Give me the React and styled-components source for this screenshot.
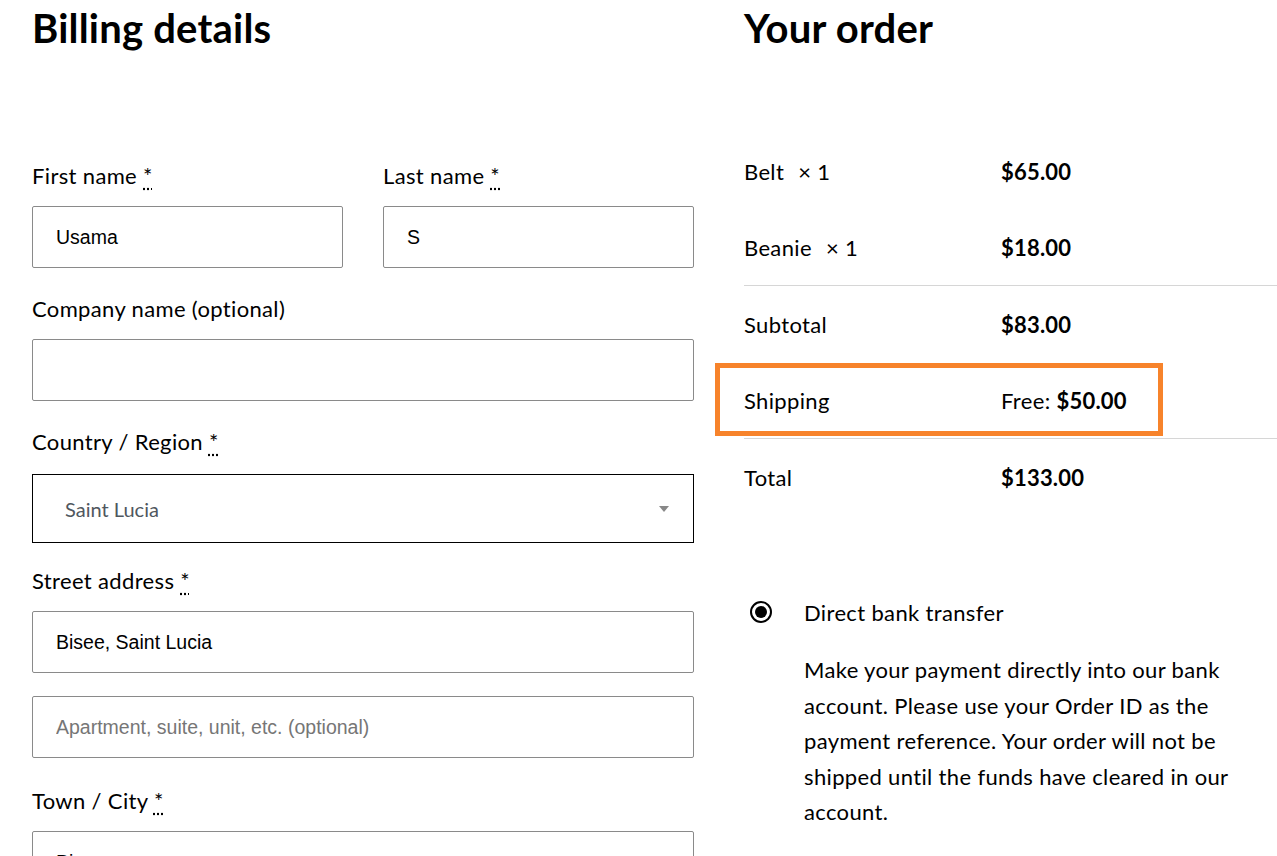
import React from 'react';
import styled, { createGlobalStyle } from 'styled-components';

const GlobalStyle = createGlobalStyle`
    html, body {
        margin: 0;
        padding: 0;
        background: #fff;
        overflow: hidden;
    }
    body {
        font-family: Lato, "Noto Sans", sans-serif;
        letter-spacing: 0.35px;
        color: #000;
    }
    * {
        box-sizing: border-box;
    }
`

const Page = styled.div`
    display: grid;
    grid-template-columns: 662px 560px;
    column-gap: 50px;
    padding-left: 32px;
    width: 1277px;
    height: 856px;
    overflow: hidden;
`

const Column = styled.section`
    display: flex;
    flex-direction: column;
`

const Heading = styled.h2`
    margin: 0;
    padding-top: 4px;
    font-size: 40px;
    line-height: 48px;
    font-weight: 700;
    letter-spacing: 0.2px;
`

const Form = styled.div`
    display: flex;
    flex-direction: column;
    margin-top: 107px;
`

const NameRow = styled.div`
    display: grid;
    grid-template-columns: 1fr 1fr;
    column-gap: 40px;
`

const Field = styled.div`
    display: flex;
    flex-direction: column;
    margin-bottom: ${props => props.gap || 24}px;
`

const Label = styled.label`
    font-size: 22px;
    line-height: 34px;
    margin-bottom: 13px;
`

const Required = styled.abbr`
    text-decoration: underline dotted;
    text-underline-offset: 4px;
    cursor: help;
`

const TextInput = styled.input`
    width: 100%;
    height: 62px;
    border: 1px solid #8a8a8a;
    border-radius: 2px;
    padding: 0 23px;
    font-family: "Liberation Sans", Arial, sans-serif;
    font-size: 19.5px;
    letter-spacing: normal;
    color: #000;
    background: #fff;
    outline: none;

    &::placeholder {
        color: #767676;
    }
`

const SelectBox = styled.div`
    display: flex;
    align-items: center;
    justify-content: space-between;
    height: 69px;
    margin-top: 2px;
    border: 1px solid #000;
    padding: 0 24px 0 32px;
    font-size: 20px;
    letter-spacing: 0;
    color: #50575e;
`

const OrderTable = styled.div`
    display: flex;
    flex-direction: column;
    margin-top: 81px;
`

const OrderRow = styled.div`
    position: relative;
    display: grid;
    grid-template-columns: 257px 1fr;
    align-items: center;
    height: ${props => props.divided ? 77 : 76}px;
    border-top: ${props => props.divided ? '1px solid #d6d6d6' : 'none'};
    font-size: 22px;
`

const Qty = styled.span`
    margin-left: 14px;
`

const Price = styled.span`
    font-weight: 700;
    letter-spacing: 0.2px;
`

const Highlight = styled.span`
    position: absolute;
    left: -29px;
    top: 1px;
    width: 448px;
    height: 73px;
    border: 5px solid #f7832b;
    pointer-events: none;
`

const Payment = styled.div`
    display: flex;
    flex-direction: column;
    margin-top: 79px;
`

const MethodRow = styled.div`
    display: flex;
    align-items: center;
    height: 36px;
    font-size: 22px;
`

const Radio = styled.span`
    display: flex;
    align-items: center;
    justify-content: center;
    width: 22px;
    height: 22px;
    margin: 0 32px 0 6px;
    border: 2px solid #000;
    border-radius: 50%;

    &::after {
        content: "";
        width: 12px;
        height: 12px;
        border-radius: 50%;
        background: #000;
    }
`

const Description = styled.p`
    margin: 22px 0 0 60px;
    max-width: 445px;
    font-size: 22px;
    line-height: 35.5px;
`

const Caret = () => (
    <svg width="10" height="6" viewBox="0 0 10 6">
        <path d="M0 0h10L5 6z" fill="#888" />
    </svg>
)

const App = () => {
    return (
        <>
            <GlobalStyle />
            <Page>
                <Column>
                    <Heading>Billing details</Heading>
                    <Form>
                        <NameRow>
                            <Field>
                                <Label>First name <Required title="required">*</Required></Label>
                                <TextInput defaultValue="Usama" />
                            </Field>
                            <Field>
                                <Label>Last name <Required title="required">*</Required></Label>
                                <TextInput defaultValue="S" />
                            </Field>
                        </NameRow>
                        <Field>
                            <Label>Company name (optional)</Label>
                            <TextInput />
                        </Field>
                        <Field gap={21}>
                            <Label>Country / Region <Required title="required">*</Required></Label>
                            <SelectBox>
                                <span>Saint Lucia</span>
                                <Caret />
                            </SelectBox>
                        </Field>
                        <Field gap={23}>
                            <Label>Street address <Required title="required">*</Required></Label>
                            <TextInput defaultValue="Bisee, Saint Lucia" />
                        </Field>
                        <Field gap={26}>
                            <TextInput placeholder="Apartment, suite, unit, etc. (optional)" />
                        </Field>
                        <Field>
                            <Label>Town / City <Required title="required">*</Required></Label>
                            <TextInput defaultValue="Bisee" />
                        </Field>
                    </Form>
                </Column>
                <Column>
                    <Heading>Your order</Heading>
                    <OrderTable>
                        <OrderRow>
                            <span>Belt<Qty>× 1</Qty></span>
                            <Price>$65.00</Price>
                        </OrderRow>
                        <OrderRow>
                            <span>Beanie<Qty>× 1</Qty></span>
                            <Price>$18.00</Price>
                        </OrderRow>
                        <OrderRow divided>
                            <span>Subtotal</span>
                            <Price>$83.00</Price>
                        </OrderRow>
                        <OrderRow>
                            <span>Shipping</span>
                            <span>Free: <Price>$50.00</Price></span>
                            <Highlight />
                        </OrderRow>
                        <OrderRow divided>
                            <span>Total</span>
                            <Price>$133.00</Price>
                        </OrderRow>
                    </OrderTable>
                    <Payment>
                        <MethodRow>
                            <Radio />
                            <span>Direct bank transfer</span>
                        </MethodRow>
                        <Description>
                            Make your payment directly into our bank account. Please use your Order ID as the payment reference. Your order will not be shipped until the funds have cleared in our account.
                        </Description>
                    </Payment>
                </Column>
            </Page>
        </>
    )
}

export default App;
